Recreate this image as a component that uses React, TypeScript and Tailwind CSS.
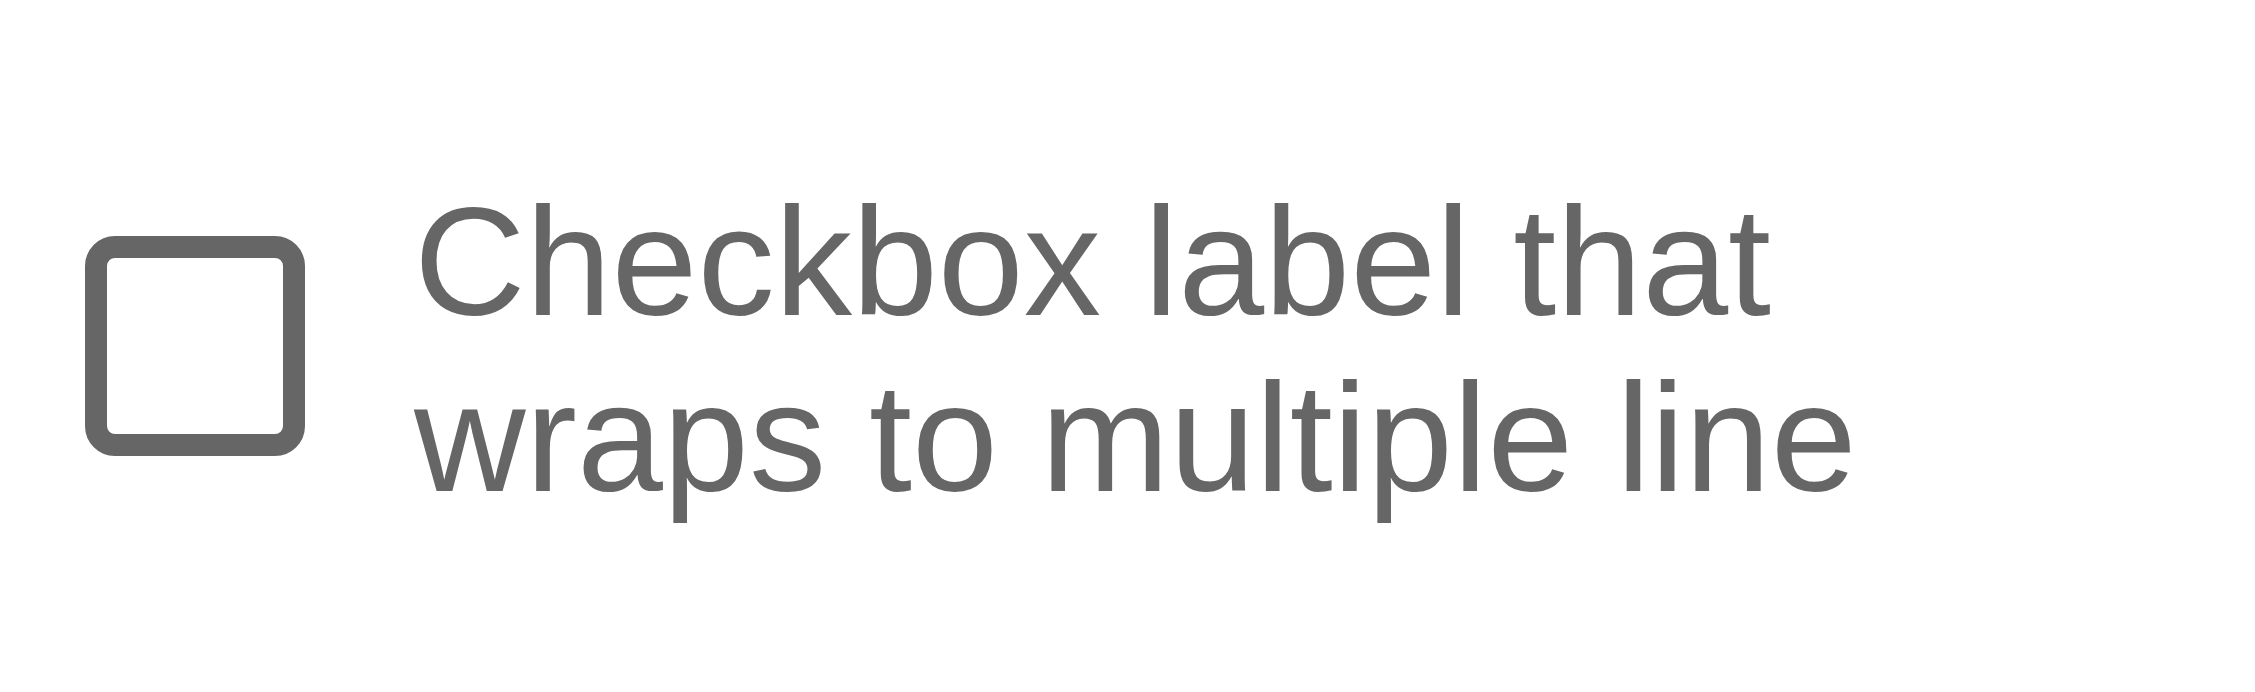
import { useState } from 'react';

export default function App() {
  const [checked, setChecked] = useState(false);

  return (
    <div className="flex h-[692px] w-full items-center bg-white pl-[85px] text-[#666666] [font-family:'Liberation_Sans',Arial,sans-serif]">
      <label className="flex cursor-pointer items-center gap-[109px]">
        <input
          type="checkbox"
          className="sr-only"
          checked={checked}
          onChange={(e) => setChecked(e.target.checked)}
        />
        <span className="block h-[220px] w-[220px] shrink-0 rounded-[30px] border-[22px] border-[#666666] bg-white" />
        <span className="max-w-[1500px] pt-[8px] text-[154.5px] leading-[176px]">
          Checkbox label that wraps to multiple line
        </span>
      </label>
    </div>
  );
}
